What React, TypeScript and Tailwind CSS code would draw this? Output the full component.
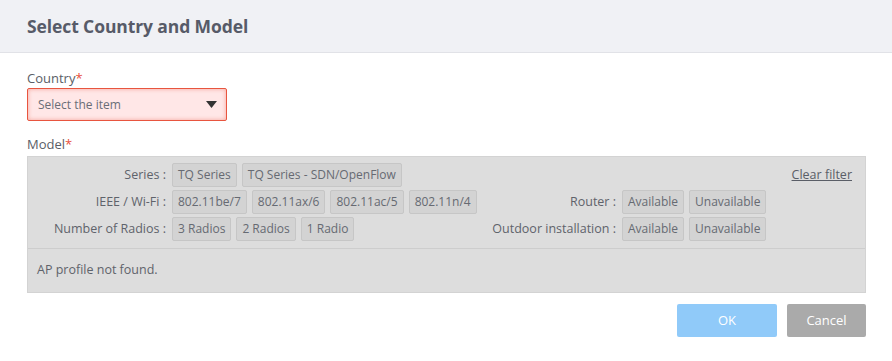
import { useState } from "react";

const font = { fontFamily: '"Open Sans", "Noto Sans", sans-serif' };

const Chip = ({ label }: { label: string }) => (
  <button className="h-[24px] rounded-[2px] border border-[#c6c6c6] bg-[#d3d3d3] px-[5px] text-[12px] leading-[22px] text-[#666a72]">
    {label}
  </button>
);

const Row = ({ label, items, w }: { label: string; items: string[]; w: string }) => (
  <div className="flex items-center">
    <span className={`${w} shrink-0 pr-[6px] text-right text-[12.5px] text-[#5f636b]`}>
      {label}
    </span>
    <div className="flex gap-[5px]">
      {items.map((i) => (
        <Chip key={i} label={i} />
      ))}
    </div>
  </div>
);

export default function App() {
  const [country] = useState("");

  return (
    <div className="h-[361px] w-[892px] bg-white" style={font}>
      <div className="flex h-[53px] items-center border-b border-[#e1e2e7] bg-[#f0f1f5] px-[27px]">
        <h1 className="text-[17.5px] font-bold tracking-[-0.1px] text-[#575b68]">
          Select Country and Model
        </h1>
      </div>

      <div className="px-[27px] pt-[16px]">
        <label className="block text-[13px] leading-[18px] text-[#5a5e67]">
          Country<span className="text-[#e8503c]">*</span>
        </label>
        <div className="mt-[1px] flex h-[33px] w-[200px] items-center justify-between rounded-[2px] border border-[#e8553f] bg-[#ffe7e7] pl-[10px] pr-[9px] shadow-[inset_0_0_4px_rgba(232,85,63,0.45)]">
          <span className="text-[12px] text-[#6a6e77]">
            {country || "Select the item"}
          </span>
          <svg width="11" height="7" viewBox="0 0 11 7">
            <path d="M0 0h11L5.5 7z" fill="#333" />
          </svg>
        </div>

        <label className="mt-[14px] block text-[13px] leading-[18px] text-[#5a5e67]">
          Model<span className="text-[#e8503c]">*</span>
        </label>

        <div className="mt-[3px] w-[839px] border border-[#d3d3d3] bg-[#dddddd]">
          <div className="flex flex-col gap-[3px] pb-[7px] pt-[6px]">
            <div className="flex items-center">
              <div className="w-[456px] shrink-0">
                <Row w="w-[144px]" label="Series :" items={["TQ Series", "TQ Series - SDN/OpenFlow"]} />
              </div>
              <a className="ml-auto mr-[13px] cursor-pointer text-[12.5px] text-[#5a5e67] underline">
                Clear filter
              </a>
            </div>
            <div className="flex items-center">
              <div className="w-[456px] shrink-0">
                <Row
                  w="w-[144px]"
                  label="IEEE / Wi-Fi :"
                  items={["802.11be/7", "802.11ax/6", "802.11ac/5", "802.11n/4"]}
                />
              </div>
              <Row w="w-[138px]" label="Router :" items={["Available", "Unavailable"]} />
            </div>
            <div className="flex items-center">
              <div className="w-[456px] shrink-0">
                <Row w="w-[144px]" label="Number of Radios :" items={["3 Radios", "2 Radios", "1 Radio"]} />
              </div>
              <Row w="w-[138px]" label="Outdoor installation :" items={["Available", "Unavailable"]} />
            </div>
          </div>
          <div className="flex h-[44px] items-center border-t border-[#cdcdcd] px-[9px] text-[12.5px] text-[#5f636b]">
            AP profile not found.
          </div>
        </div>

        <div className="-mr-[27px] mt-[11px] flex justify-end gap-[10px] pr-[26px]">
          <button className="h-[33px] w-[100px] rounded-[2px] bg-[#90caf9] text-[13px] text-white">
            OK
          </button>
          <button className="h-[33px] w-[79px] rounded-[2px] bg-[#aaaaaa] text-[13px] text-white">
            Cancel
          </button>
        </div>
      </div>
    </div>
  );
}
